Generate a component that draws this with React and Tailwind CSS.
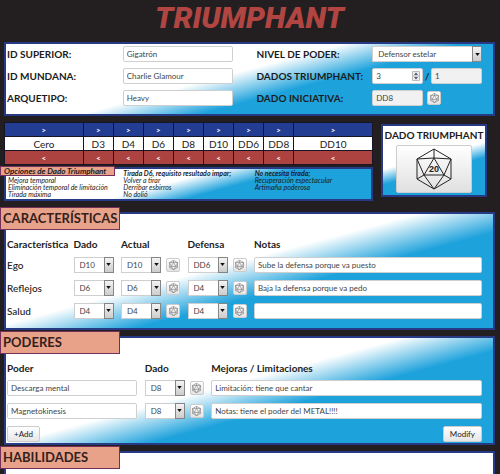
import React from "react";

const DICE = ["D4", "D6", "D8", "D10", "DD6", "DD8", "DD10"];

const frame = "border-2 border-[#263a86]";
const sky = "bg-[linear-gradient(165deg,#ffffff_45%,#1ea2dc_61%)]";
const panel = `${frame} ${sky}`;
const field =
  "block h-4 w-full min-w-0 rounded-xs border border-[#cfcfcf] px-[3px] text-[8px] leading-3 text-[#444444]";

function TextField({ label, value, id, muted }) {
  return (
    <input
      id={id}
      aria-label={label}
      defaultValue={value}
      className={`${field} ${muted ? "bg-[#f1f1f1]" : "bg-white"}`}
    />
  );
}

function SelectField({ label, value, id, options = DICE }) {
  return (
    <div className="relative w-full">
      <select
        id={id}
        aria-label={label}
        defaultValue={value}
        className="block h-4 w-full appearance-none border border-[#cfcfcf] bg-white pr-3 pl-[5px] text-[8px] leading-3 text-[#444444]"
      >
        {options.map((o) => (
          <option key={o}>{o}</option>
        ))}
      </select>
      <span className="pointer-events-none absolute inset-y-0 right-0 flex w-[10px] items-center justify-center border border-[#858585] bg-linear-to-b from-[#f4f4f4] to-[#cccccc]">
        <svg viewBox="0 0 6 4" className="h-[3px] w-[5px]">
          <path d="M0 0h6L3 4z" fill="#111" />
        </svg>
      </span>
    </div>
  );
}

function D20({ className, detailed }) {
  return (
    <svg
      viewBox="0 0 36 42"
      className={className}
      fill="none"
      stroke="currentColor"
      strokeWidth={detailed ? 1 : 2.4}
      strokeLinejoin="round"
    >
      <path d="M18 1 35 11V31L18 41 1 31V11Z" />
      <path d="M18 10 28 27H8Z" />
      <path d="M18 1v9M1 11l17-1 17 1M1 11l7 16M35 11l-7 16M1 31l7-4 10 14 10-14 7 4" />
      {detailed && (
        <text
          x="18"
          y="24"
          textAnchor="middle"
          fontSize="9"
          fontWeight="bold"
          fill="#222"
          stroke="none"
          fontFamily="Liberation Sans, sans-serif"
        >
          20
        </text>
      )}
    </svg>
  );
}

function RollButton({ label }) {
  return (
    <button
      type="button"
      aria-label={label}
      className="flex h-[14px] w-[14px] shrink-0 items-center justify-center rounded-xs border border-[#cccccc] bg-linear-to-b from-white to-[#e4e4e4] text-[#777777]"
    >
      <D20 className="h-[10px] w-[9px]" />
    </button>
  );
}

function Section({ title, children, background = sky, className = "" }) {
  return (
    <section className={`relative ${frame} ${background} ${className}`}>
      <h2 className="absolute -top-[7px] -left-[6px] flex h-[23px] w-[120px] items-center border border-[#75305a] bg-[#e9a28a] pl-[2px] text-[13px] font-bold text-[#33211c]">
        {title}
      </h2>
      {children}
    </section>
  );
}

function TrackTable() {
  const steps = ["Cero", "D3", "D4", "D6", "D8", "D10", "DD6", "DD8", "DD10"];
  const cell = "h-[14px] border border-[#171426] p-0 text-center";
  return (
    <table className="w-full table-fixed border-collapse text-[10px] leading-3">
      <colgroup>
        {steps.map((s, i) => (
          <col key={s} className={i === 0 || i === 8 ? "w-[21.4%]" : ""} />
        ))}
      </colgroup>
      <tbody>
        <tr className="bg-[#233d92] text-white">
          {steps.map((s) => (
            <td key={s} className={cell}>
              <button type="button" aria-label={`Subir ${s}`} className="block w-full text-[8px] font-bold">
                &gt;
              </button>
            </td>
          ))}
        </tr>
        <tr className="bg-white text-[#222222]">
          {steps.map((s) => (
            <td key={s} className={cell}>
              {s}
            </td>
          ))}
        </tr>
        <tr className="bg-[#ad4340] text-white">
          {steps.map((s) => (
            <td key={s} className={cell}>
              <button type="button" aria-label={`Bajar ${s}`} className="block w-full text-[8px] font-bold">
                &lt;
              </button>
            </td>
          ))}
        </tr>
      </tbody>
    </table>
  );
}

const traits = [
  ["Ego", "D10", "D10", "DD6", "Sube la defensa porque va puesto"],
  ["Reflejos", "D6", "D6", "D4", "Baja la defensa porque va pedo"],
  ["Salud", "D4", "D4", "D4", ""],
];

const powers = [
  ["Descarga mental", "D8", "Limitación: tiene que cantar"],
  ["Magnetokinesis", "D8", "Notas: tiene el poder del METAL!!!!"],
];

const label = "text-[10px] font-bold leading-4 whitespace-nowrap";
const action =
  "h-4 rounded-xs border border-[#cccccc] bg-linear-to-b from-white to-[#e6e6e6] px-[6px] text-[8px] leading-3 text-[#222222]";

export default function App() {
  return (
    <main className="flex min-h-screen flex-col bg-[#231f20] pr-[5px] pl-1 font-[Lato,'Noto_Sans',sans-serif] text-[#1c1c1c]">
      <h1 className="flex h-[42px] items-start justify-center font-[Roboto,'Liberation_Sans',sans-serif] text-[30px] leading-[36px] font-black text-[#b04542] italic">
        TRIUMPHANT
      </h1>

      <section
        className={`grid grid-cols-[116fr_110fr_24fr_116fr_110fr] gap-y-[6px] pt-[2px] pr-[11px] pb-2 pl-[1px] ${panel}`}
      >
        <label htmlFor="superior" className={label}>ID SUPERIOR:</label>
        <TextField id="superior" value="Gigatrón" />
        <span />
        <label htmlFor="nivel" className={label}>NIVEL DE PODER:</label>
        <SelectField id="nivel" value="Defensor estelar" options={["Defensor estelar"]} />

        <label htmlFor="mundana" className={label}>ID MUNDANA:</label>
        <TextField id="mundana" value="Charlie Glamour" />
        <span />
        <label htmlFor="dados" className={label}>DADOS TRIUMPHANT:</label>
        <div className="grid grid-cols-[51fr_8fr_51fr] items-center">
          <div className="relative">
            <TextField id="dados" value="3" />
            <svg viewBox="0 0 8 10" className="pointer-events-none absolute top-[3px] right-[3px] h-[10px] w-2">
              <path d="M.5.5h7v9h-7zM.5 5h7" fill="#eee" stroke="#bbb" />
              <path d="M4 1.5 6 4H2zM4 8.5 2 6h4z" fill="#4a5878" />
            </svg>
          </div>
          <span className="text-center text-[10px] font-bold">/</span>
          <TextField label="Máximo de dados" value="1" muted />
        </div>

        <label htmlFor="arquetipo" className={label}>ARQUETIPO:</label>
        <TextField id="arquetipo" value="Heavy" />
        <span />
        <label htmlFor="iniciativa" className={label}>DADO INICIATIVA:</label>
        <div className="grid grid-cols-[51fr_55fr] items-center gap-1">
          <TextField id="iniciativa" value="DD8" muted />
          <RollButton label="Tirar iniciativa" />
        </div>
      </section>

      <div className="mt-[6px] mr-2 grid grid-cols-[369fr_106fr] gap-2">
        <div className="flex flex-col gap-[2px]">
          <TrackTable />
          <section
            className={`relative grid h-[34px] grid-cols-[114fr_130fr_115fr] pl-[2px] text-[7px] leading-[7px] whitespace-nowrap italic ${panel}`}
          >
            <h2 className="absolute -top-[3px] -left-[6px] flex h-[10px] w-[115px] items-center border border-[#75305a] bg-[#e9a28a] pl-[3px] text-[8px] leading-[8px] font-bold">
              Opciones de Dado Triumphant
            </h2>
            <ul className="pt-2">
              <li>Mejora temporal</li>
              <li>Eliminación temporal de limitación</li>
              <li>Tirada máxima</li>
            </ul>
            <div className="pt-[1px]">
              <h3 className="font-bold">Tirada D6, requisito resultado impar;</h3>
              <p>Volver a tirar</p>
              <p>Derribar esbirros</p>
              <p>No dolió</p>
            </div>
            <div className="pt-[1px]">
              <h3 className="font-bold">No necesita tirada;</h3>
              <p>Recuperación espectacular</p>
              <p>Artimaña poderosa</p>
            </div>
          </section>
        </div>
        <section className={`mt-[2px] mb-1 flex flex-col items-center pt-[1px] ${panel}`}>
          <h2 className="text-[10px] leading-4 font-bold whitespace-nowrap">DADO TRIUMPHANT</h2>
          <button
            type="button"
            aria-label="Tirar dado Triumphant"
            className="mt-[2px] flex h-12 w-[76px] items-center justify-center rounded-xs border border-[#cccccc] bg-linear-to-b from-white to-[#e0e0e0] text-[#222222]"
          >
            <D20 detailed className="h-[42px] w-9" />
          </button>
        </section>
      </div>

      <Section title="CARACTERÍSTICAS" className="mt-[11px] pt-[21px] pr-[11px] pb-[6px] pl-[1px]">
        <table className="w-full table-fixed border-collapse text-left text-[10px] leading-4">
          <colgroup>
            <col className="w-[14%]" />
            <col className="w-[10%]" />
            <col className="w-[14%]" />
            <col className="w-[14%]" />
            <col />
          </colgroup>
          <thead>
            <tr>
              {["Característica", "Dado", "Actual", "Defensa", "Notas"].map((h) => (
                <th key={h} className="h-[18px] p-0 font-bold">{h}</th>
              ))}
            </tr>
          </thead>
          <tbody>
            {traits.map(([name, dado, actual, defensa, notas]) => (
              <tr key={name}>
                <th className="h-[23px] p-0 font-medium">{name}</th>
                <td className="p-0">
                  <div className="w-10">
                    <SelectField label={`Dado de ${name}`} value={dado} />
                  </div>
                </td>
                <td className="p-0">
                  <div className="flex items-center gap-[5px]">
                    <div className="w-10">
                      <SelectField label={`Actual de ${name}`} value={actual} />
                    </div>
                    <RollButton label={`Tirar ${name}`} />
                  </div>
                </td>
                <td className="p-0">
                  <div className="flex items-center gap-[5px]">
                    <div className="w-10">
                      <SelectField label={`Defensa de ${name}`} value={defensa} />
                    </div>
                    <RollButton label={`Tirar defensa de ${name}`} />
                  </div>
                </td>
                <td className="p-0">
                  <TextField label={`Notas de ${name}`} value={notas} />
                </td>
              </tr>
            ))}
          </tbody>
        </table>
      </Section>

      <Section title="PODERES" className="mt-[6px] pt-[22px] pr-[11px] pb-[1px] pl-[1px]">
        <table className="w-full table-fixed border-collapse text-left text-[10px] leading-4">
          <colgroup>
            <col className="w-[29%]" />
            <col className="w-[14%]" />
            <col />
          </colgroup>
          <thead>
            <tr>
              {["Poder", "Dado", "Mejoras / Limitaciones"].map((h) => (
                <th key={h} className="h-4 p-0 font-bold">{h}</th>
              ))}
            </tr>
          </thead>
          <tbody>
            {powers.map(([name, dado, notas]) => (
              <tr key={name}>
                <td className="h-[23px] py-0 pr-2 pl-0">
                  <TextField label="Poder" value={name} />
                </td>
                <td className="p-0">
                  <div className="flex items-center gap-[5px]">
                    <div className="w-10">
                      <SelectField label={`Dado de ${name}`} value={dado} />
                    </div>
                    <RollButton label={`Tirar ${name}`} />
                  </div>
                </td>
                <td className="p-0">
                  <TextField label={`Mejoras de ${name}`} value={notas} />
                </td>
              </tr>
            ))}
          </tbody>
        </table>
        <div className="mt-1 flex justify-between">
          <button type="button" className={action}>+Add</button>
          <button type="button" className={action}>Modify</button>
        </div>
      </Section>

      <Section title="HABILIDADES" background="bg-white" className="mt-[6px] flex-1 border-b-0" />
    </main>
  );
}
